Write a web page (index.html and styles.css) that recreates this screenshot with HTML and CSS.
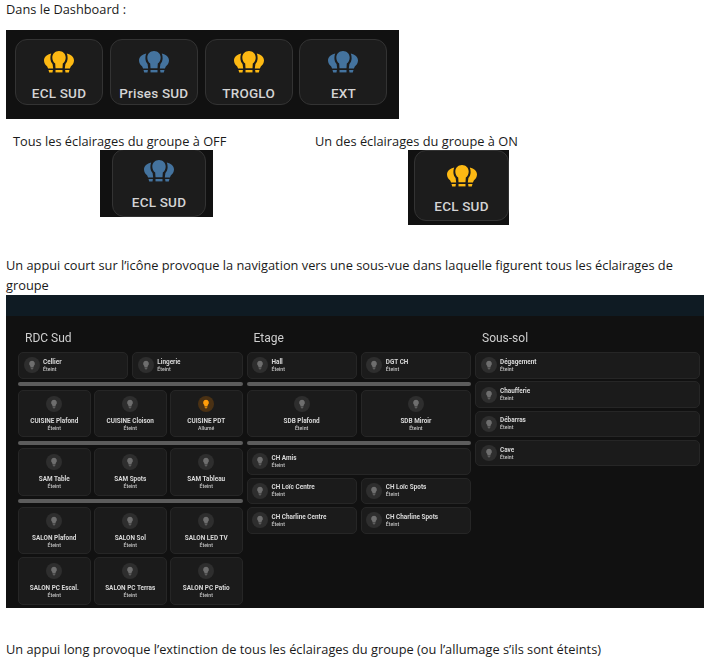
FILE: index.html
```html
<!DOCTYPE html>
<html lang="fr">
<head>
<meta charset="utf-8">
<title>Dashboard</title>
<link rel="stylesheet" href="styles.css">
</head>
<body>
<svg class="defs" width="0" height="0" aria-hidden="true">
  <symbol id="group" viewBox="0 0 30 24">
    <path d="M15 0C11.200 0 8.300 2.900 8.300 6.500c0 2.600 1.100 4.700 2.900 6.100l.3 4.700h7l.3-4.700c1.800-1.400 2.900-3.500 2.900-6.100C21.700 2.900 18.800 0 15 0z"/>
    <path d="M11.500 19h7v2.400h-7z"/>
    <path d="M7.200 2.500C3 3.600 0 6 0 9.500c0 2.600 1.500 4.500 3.200 5.900l.9 2h5.100l-.6-4.500C7.200 11.600 6.400 9.500 6.400 7.300c0-1.800.2-3.300.8-4.800z"/>
    <path d="M22.800 2.500C27 3.600 30 6 30 9.500c0 2.600-1.500 4.500-3.200 5.900l-.9 2h-5.100l.6-4.500c1.400-1.300 2.200-3.400 2.200-5.600 0-1.800-.2-3.300-.8-4.800z"/>
    <path d="M4.500 19h4.400l-.4 2.400H5.200zM21.100 19h4.400l-.7 2.400h-3.300z"/>
  </symbol>
  <symbol id="bulb" viewBox="0 0 24 24">
    <path d="M12 2a7 7 0 0 0-4 12.700V17a1 1 0 0 0 1 1h6a1 1 0 0 0 1-1v-2.300A7 7 0 0 0 12 2zM9 21a1 1 0 0 0 1 1h4a1 1 0 0 0 1-1v-1H9z"/>
  </symbol>
</svg>

<p class="line first">Dans le Dashboard :</p>

<div class="shot strip">
  <div class="tile"><svg class="group on"><use href="#group"/></svg><span>ECL SUD</span></div>
  <div class="tile"><svg class="group off"><use href="#group"/></svg><span>Prises SUD</span></div>
  <div class="tile"><svg class="group on"><use href="#group"/></svg><span>TROGLO</span></div>
  <div class="tile"><svg class="group off"><use href="#group"/></svg><span>EXT</span></div>
</div>

<div class="compare">
  <div class="state state-off">
    <p class="line caption">Tous les éclairages du groupe à OFF</p>
    <div class="shot crop crop-off">
      <div class="tile"><svg class="group off"><use href="#group"/></svg><span>ECL SUD</span></div>
    </div>
  </div>
  <div class="state state-on">
    <p class="line caption">Un des éclairages du groupe à ON</p>
    <div class="shot crop crop-on">
      <div class="tile"><svg class="group on"><use href="#group"/></svg><span>ECL SUD</span></div>
    </div>
  </div>
</div>

<p class="line para">Un appui court sur l’icône provoque la navigation vers une sous-vue dans laquelle figurent tous les éclairages de groupe</p>

<div class="dash">
  <div class="dash-top"></div>
  <div class="columns">
    <section class="col">
      <h2>RDC Sud</h2>
      <div class="grid g2">
        <div class="row"><i class="dot"><svg><use href="#bulb"/></svg></i><div><b>Cellier</b><small>Éteint</small></div></div>
        <div class="row"><i class="dot"><svg><use href="#bulb"/></svg></i><div><b>Lingerie</b><small>Éteint</small></div></div>
      </div>
      <hr>
      <div class="grid g3">
        <div class="box"><i class="dot"><svg><use href="#bulb"/></svg></i><b>CUISINE Plafond</b><small>Éteint</small></div>
        <div class="box"><i class="dot"><svg><use href="#bulb"/></svg></i><b>CUISINE Cloison</b><small>Éteint</small></div>
        <div class="box"><i class="dot lit"><svg><use href="#bulb"/></svg></i><b>CUISINE PDT</b><small>Allumé</small></div>
      </div>
      <hr>
      <div class="grid g3">
        <div class="box"><i class="dot"><svg><use href="#bulb"/></svg></i><b>SAM Table</b><small>Éteint</small></div>
        <div class="box"><i class="dot"><svg><use href="#bulb"/></svg></i><b>SAM Spots</b><small>Éteint</small></div>
        <div class="box"><i class="dot"><svg><use href="#bulb"/></svg></i><b>SAM Tableau</b><small>Éteint</small></div>
      </div>
      <hr>
      <div class="grid g3">
        <div class="box"><i class="dot"><svg><use href="#bulb"/></svg></i><b>SALON Plafond</b><small>Éteint</small></div>
        <div class="box"><i class="dot"><svg><use href="#bulb"/></svg></i><b>SALON Sol</b><small>Éteint</small></div>
        <div class="box"><i class="dot"><svg><use href="#bulb"/></svg></i><b>SALON LED TV</b><small>Éteint</small></div>
        <div class="box"><i class="dot"><svg><use href="#bulb"/></svg></i><b>SALON PC Escal.</b><small>Éteint</small></div>
        <div class="box"><i class="dot"><svg><use href="#bulb"/></svg></i><b>SALON PC Terras</b><small>Éteint</small></div>
        <div class="box"><i class="dot"><svg><use href="#bulb"/></svg></i><b>SALON PC Patio</b><small>Éteint</small></div>
      </div>
    </section>
    <section class="col">
      <h2>Etage</h2>
      <div class="grid g2">
        <div class="row"><i class="dot"><svg><use href="#bulb"/></svg></i><div><b>Hall</b><small>Éteint</small></div></div>
        <div class="row"><i class="dot"><svg><use href="#bulb"/></svg></i><div><b>DGT CH</b><small>Éteint</small></div></div>
      </div>
      <hr>
      <div class="grid g2">
        <div class="box"><i class="dot"><svg><use href="#bulb"/></svg></i><b>SDB Plafond</b><small>Éteint</small></div>
        <div class="box"><i class="dot"><svg><use href="#bulb"/></svg></i><b>SDB Miroir</b><small>Éteint</small></div>
      </div>
      <hr>
      <div class="grid g2">
        <div class="row wide"><i class="dot"><svg><use href="#bulb"/></svg></i><div><b>CH Amis</b><small>Éteint</small></div></div>
        <div class="row"><i class="dot"><svg><use href="#bulb"/></svg></i><div><b>CH Loïc Centre</b><small>Éteint</small></div></div>
        <div class="row"><i class="dot"><svg><use href="#bulb"/></svg></i><div><b>CH Loïc Spots</b><small>Éteint</small></div></div>
        <div class="row"><i class="dot"><svg><use href="#bulb"/></svg></i><div><b>CH Charline Centre</b><small>Éteint</small></div></div>
        <div class="row"><i class="dot"><svg><use href="#bulb"/></svg></i><div><b>CH Charline Spots</b><small>Éteint</small></div></div>
      </div>
    </section>
    <section class="col">
      <h2>Sous-sol</h2>
      <div class="grid g1">
        <div class="row"><i class="dot"><svg><use href="#bulb"/></svg></i><div><b>Dégagement</b><small>Éteint</small></div></div>
        <div class="row"><i class="dot"><svg><use href="#bulb"/></svg></i><div><b>Chaufferie</b><small>Éteint</small></div></div>
        <div class="row"><i class="dot"><svg><use href="#bulb"/></svg></i><div><b>Débarras</b><small>Éteint</small></div></div>
        <div class="row"><i class="dot"><svg><use href="#bulb"/></svg></i><div><b>Cave</b><small>Éteint</small></div></div>
      </div>
    </section>
  </div>
</div>

<p class="line last">Un appui long provoque l’extinction de tous les éclairages du groupe (ou l’allumage s’ils sont éteints)</p>
</body>
</html>
```
FILE: styles.css
```css
html, body { margin: 0; padding: 0; background: #fff; }
body {
  width: 717px;
  height: 667px;
  overflow: hidden;
  padding: 0 6px;
  box-sizing: border-box;
  font-family: "Open Sans", "Noto Sans", sans-serif;
  font-size: 12.8px;
  color: #1a1a1a;
}
.defs { position: absolute; }
.line { margin: 0; line-height: 20px; }
.first { margin-top: -1px; }

/* Dashboard button crops */
.shot { background: #111; font-family: Roboto, sans-serif; }
.strip {
  width: 393px;
  height: 89px;
  margin-top: 11px;
  padding: 9px 0 0 9px;
  box-sizing: border-box;
  display: flex;
  gap: 6.800px;
}
.tile {
  flex: none;
  width: 88px;
  height: 66px;
  box-sizing: border-box;
  background: #1c1c1c;
  border: 1px solid #333;
  border-radius: 12px;
  display: flex;
  flex-direction: column;
  align-items: center;
  color: #d4d4d4;
  font-weight: 500;
  font-size: 13.5px;
  letter-spacing: .2px;
}
.tile span { line-height: 16px; margin-top: 10px; white-space: nowrap; }
.group { width: 30px; height: 24px; margin-top: 11px; }
.on { fill: #fdb913; }
.off { fill: #44739e; }

.compare { display: flex; height: 96px; margin-top: 12px; }
.state { width: 309px; flex: none; }
.caption { padding-left: 7px; }
.state-on .caption { padding-left: 0; }
.state-off { width: 309px; }
.crop { overflow: hidden; position: relative; display: flex; }
.crop-off { width: 113px; height: 67px; margin: -1px 0 0 94px; padding-left: 12px; box-sizing: border-box; }
.crop-off .tile { width: 94px; margin-top: -1px; height: 68px; }
.crop-off .group { margin-top: 10px; }
.crop-off .tile span { margin-top: 10px; }
.crop-on { width: 101px; height: 75px; margin: -1px 0 0 93px; padding-left: 6px; box-sizing: border-box; }
.crop-on .tile { width: 95px; height: 71px; }
.crop-on .group { margin-top: 14px; }
.crop-on .tile span { margin-top: 9px; }
.para { margin-top: 28px; width: 690px; }

/* Sub-view */
.dash {
  width: 698px;
  height: 313px;
  background: #111;
  font-family: Roboto, sans-serif;
  color: #d6d6d6;
  filter: blur(.35px);
}
.dash-top { height: 21px; background: #0f1b23; }
.columns { display: grid; grid-template-columns: repeat(3, 224.500px); column-gap: 4px; padding-left: 12px; }
.col h2 { margin: 0; padding: 15px 0 0 7px; height: 36px; box-sizing: border-box; font-weight: 400; font-size: 12px; line-height: 14px; color: #cfcfcf; }
.grid { display: grid; gap: 3px 4px; }
.g1 { grid-template-columns: 1fr; gap: 2.800px; }
.g2 { grid-template-columns: 1fr 1fr; }
.g3 { grid-template-columns: 1fr 1fr 1fr; column-gap: 3.500px; }
.wide { grid-column: 1 / -1; }
hr {
  height: 4px;
  margin: 3.500px 0;
  border: 0;
  border-radius: 2px;
  background: #5c5c5c;
}
.row, .box {
  background: #1b1b1b;
  border: 1px solid #262626;
  border-radius: 5px;
  box-sizing: border-box;
}
.row { height: 26.500px; display: flex; align-items: center; padding-left: 4.500px; gap: 3.500px; }
.box { height: 47.500px; display: flex; flex-direction: column; align-items: center; padding-top: 5px; }
b { display: block; font-weight: 700; font-size: 6.400px; line-height: 8px; white-space: nowrap; color: #d8d8d8; }
small { display: block; font-size: 5.200px; line-height: 7px; font-weight: 500; color: #c4c4c4; }
.box b { margin-top: 5px; }
.dot {
  width: 16px;
  height: 16px;
  border-radius: 50%;
  background: #2e2e2e;
  display: flex;
  align-items: center;
  justify-content: center;
  flex: none;
}
.dot svg { width: 10px; height: 10px; fill: #6e6e6e; }
.lit { background: #4a3114; }
.lit svg { fill: #ff9d0a; }
.last { margin-top: 31px; }
```
